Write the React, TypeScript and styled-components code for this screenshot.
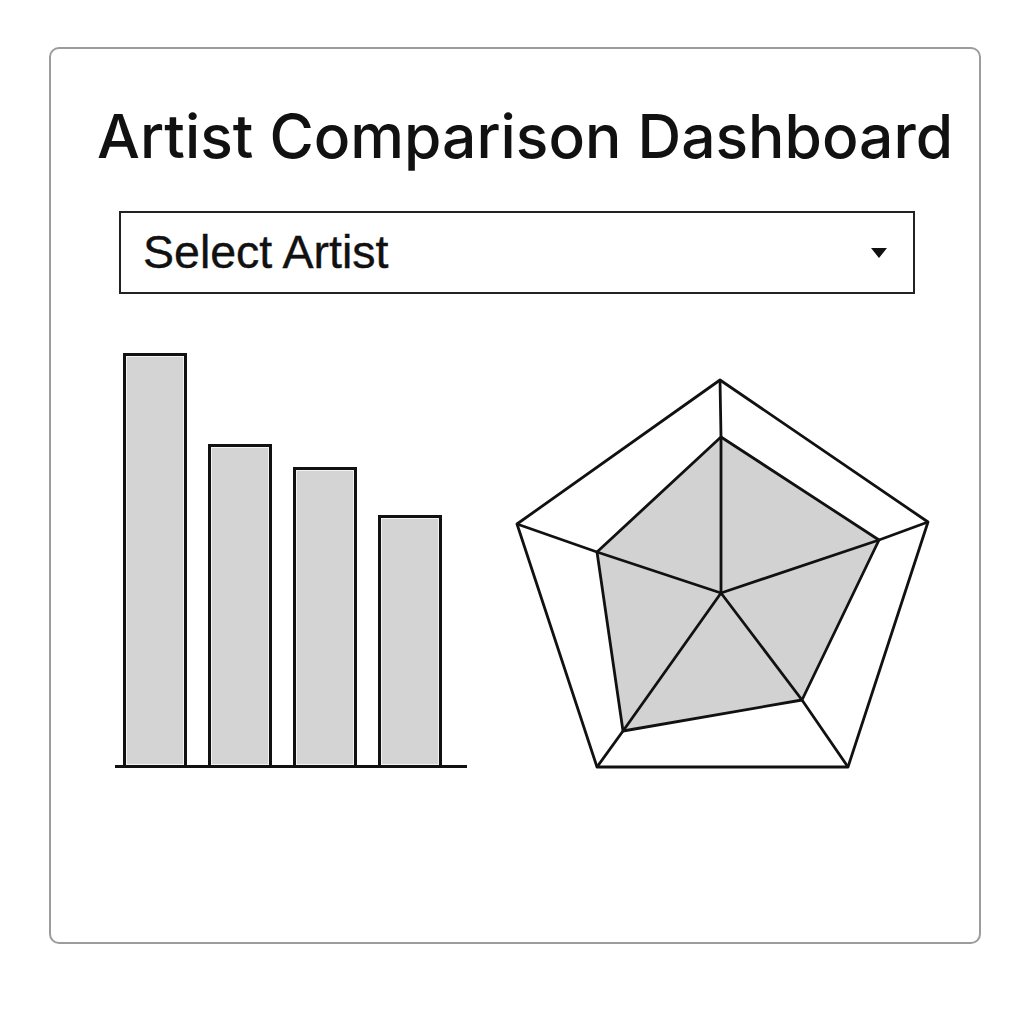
import React from 'react';
import styled, { createGlobalStyle } from 'styled-components';

const GlobalStyle = createGlobalStyle`
  html, body {
    margin: 0;
    padding: 0;
    background: #fff;
  }
`;

const bars = [412, 321, 298, 250];

const outer = [
  [720, 378],
  [928, 520],
  [848, 765],
  [597, 765],
  [517, 522],
];

const inner = [
  [721, 435],
  [879, 538],
  [802, 698],
  [623, 729],
  [597, 550],
];

const center = [721, 591];

function App() {
  const pts = (list: number[][]) => list.map((p) => p.join(',')).join(' ');

  return (
    <Page>
      <GlobalStyle />
      <Card>
        <Title>Artist Comparison Dashboard</Title>
        <Select>
          <SelectLabel>Select Artist</SelectLabel>
          <Caret />
        </Select>
        <Charts>
          <BarChart>
            {bars.map((h, i) => (
              <Bar key={i} style={{ height: h }} />
            ))}
          </BarChart>
          <Radar viewBox="513 374 420 394" width={420} height={394}>
            <polygon points={pts(inner)} fill="#d2d2d2" stroke="none" />
            <polygon points={pts(outer)} fill="none" stroke="#111" strokeWidth={2.8} strokeLinejoin="round" />
            <polygon points={pts(inner)} fill="none" stroke="#111" strokeWidth={2.8} strokeLinejoin="round" />
            {outer.map((p, i) => (
              <polyline
                key={i}
                points={pts([center, inner[i], p])}
                fill="none"
                stroke="#111"
                strokeWidth={2.8}
              />
            ))}
          </Radar>
        </Charts>
      </Card>
    </Page>
  );
}

const Page = styled.div`
  padding: 47px 0 0 49px;
  width: 1024px;
  height: 1024px;
  box-sizing: border-box;
`;

const Card = styled.div`
  box-sizing: border-box;
  width: 932px;
  height: 897px;
  border: 2px solid #9c9c9c;
  border-radius: 10px;
  padding: 51px 0 0 0;
  display: flex;
  flex-direction: column;
`;

const Title = styled.h1`
  margin: 0 0 0 46px;
  font-family: 'Inter', 'Liberation Sans', sans-serif;
  font-weight: 500;
  font-size: 60.5px;
  line-height: 72px;
  color: #111;
  white-space: nowrap;
`;

const Select = styled.div`
  box-sizing: border-box;
  margin: 39px 0 0 68px;
  width: 796px;
  height: 83px;
  border: 2px solid #222;
  display: flex;
  align-items: center;
  justify-content: space-between;
  padding: 0 26px 0 22px;
`;

const SelectLabel = styled.span`
  font-family: 'Liberation Sans', Arial, sans-serif;
  font-size: 46.5px;
  line-height: 1;
  color: #111;
  -webkit-text-stroke: 0.4px #111;
`;

const Caret = styled.span`
  width: 0;
  height: 0;
  border-left: 8px solid transparent;
  border-right: 8px solid transparent;
  border-top: 10px solid #111;
`;

const Charts = styled.div`
  display: flex;
  align-items: flex-end;
  margin: 0 0 0 64px;
  height: 474px;
`;

const BarChart = styled.div`
  box-sizing: border-box;
  width: 352px;
  display: flex;
  align-items: flex-end;
  gap: 21px;
  padding-left: 8px;
  border-bottom: 3px solid #111;
`;

const Bar = styled.div`
  box-sizing: border-box;
  width: 64px;
  background: #d4d4d4;
  border: 3px solid #111;
  border-bottom: none;
  box-shadow: inset 0 0 0 1px #f2f2f2;
`;

const Radar = styled.svg`
  display: block;
  margin-left: 46px;
  margin-bottom: -2px;
`;

export default App;
